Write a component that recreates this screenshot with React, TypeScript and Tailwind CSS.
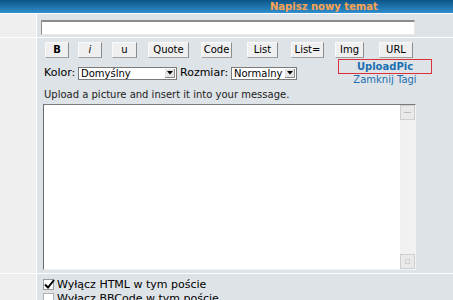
import React from "react";

const font = { fontFamily: '"DejaVu Sans", Verdana, sans-serif' };

function Btn({ label, w, ml, cls = "" }: { label: string; w: number; ml: number; cls?: string }) {
  return (
    <div
      className={`h-[16px] flex items-center justify-center text-[10px] leading-none text-black bg-[#efefef] border border-t-[#fafafa] border-l-[#fafafa] border-r-[#8c8c8c] border-b-[#a0a0a0] ${cls}`}
      style={{ width: w, marginLeft: ml }}
    >
      {label}
    </div>
  );
}

function Select({ label, w }: { label: string; w: number }) {
  return (
    <div
      className="h-[13px] bg-white border border-[#7a7a7a] flex items-center text-[10px] leading-none text-black pl-[2px] relative"
      style={{ width: w }}
    >
      <span>{label}</span>
      <div className="absolute right-[1px] top-[1px] w-[10px] h-[9px] bg-[#e4e4e4] border-r border-b border-[#8a8a8a] flex items-center justify-center">
        <svg width="6" height="4" viewBox="0 0 6 4">
          <polygon points="0,0 6,0 3,3.5" fill="#000" />
        </svg>
      </div>
    </div>
  );
}

export default function App() {
  return (
    <div className="w-[453px] h-[300px] overflow-hidden bg-white" style={font}>
      {/* header */}
      <div className="h-[13px] bg-gradient-to-b from-[#0b5588] to-[#2f8fcc] text-[#ffa34f] font-bold text-[10px] leading-[13px] pl-[270px]">
        Napisz nowy temat
      </div>
      {/* row 1: subject */}
      <div className="flex mt-px h-[23px]">
        <div className="w-[36px] bg-[#efefef]" />
        <div className="flex-1 ml-px bg-[#dee3e7] pt-[6px] pl-[4px]">
          <div className="w-[374px] h-[15px] bg-white border-t-2 border-l border-r border-b border-t-[#8c8c8c] border-l-[#8c8c8c] border-r-[#e8e8e8] border-b-[#e8e8e8]" />
        </div>
      </div>
      {/* row 2: message */}
      <div className="flex mt-px h-[235px]">
        <div className="w-[36px] bg-[#efefef]" />
        <div className="flex-1 ml-px bg-[#dee3e7] flex flex-col">
          <div className="flex mt-[4px]">
            <Btn label="B" w={24} ml={8} cls="font-bold" />
            <Btn label="i" w={24} ml={9} cls="italic" />
            <Btn label="u" w={25} ml={10} />
            <Btn label="Quote" w={41} ml={11} />
            <Btn label="Code" w={31} ml={12} />
            <Btn label="List" w={31} ml={15} />
            <Btn label="List=" w={33} ml={13} />
            <Btn label="Img" w={29} ml={11} />
            <Btn label="URL" w={34} ml={15} />
          </div>
          <div className="flex h-[26px] mt-px">
            <div className="w-[260px] flex items-center h-[26px] pl-[7px] pt-[3px] text-[11px] text-black">
              <span className="w-[34px] shrink-0">Kolor:</span>
              <Select label="Domyślny" w={99} />
              <span className="ml-[3px] w-[51px] shrink-0">Rozmiar:</span>
              <Select label="Normalny" w={66} />
            </div>
            <div className="ml-[41px] flex flex-col items-center">
              <div className="w-[94px] h-[15px] border border-[#d9303a] flex items-center justify-center text-[10px] font-bold text-[#1c6fb0] leading-none">
                UploadPic
              </div>
              <div className="text-[10px] text-[#1c6fb0] leading-[10px] mt-[1px]">Zamknij Tagi</div>
            </div>
          </div>
          <div className="text-[10px] text-[#222] pl-[7px] mt-[4px] leading-[12px]">
            Upload a picture and insert it into your message.
          </div>
          <div className="ml-[6px] mt-[3px] w-[373px] h-[166px] bg-white border-t border-l border-t-[#7a7a7a] border-l-[#6a6a6a] border-r border-b border-r-[#f2f2f2] border-b-[#f2f2f2] flex justify-end">
            <div className="w-[15px] h-full bg-[#f1f1f1] flex flex-col justify-between">
              <div className="w-[15px] h-[15px] bg-[#e9e9e9] border border-[#cfcfcf] flex items-center justify-center">
                <div className="w-[7px] h-px bg-[#bdbdbd]" />
              </div>
              <div className="w-[15px] h-[15px] bg-[#e9e9e9] border border-[#cfcfcf] flex items-center justify-center">
                <div className="w-[5px] h-[5px] border border-[#d0d0d0]" />
              </div>
            </div>
          </div>
        </div>
      </div>
      {/* row 3: options */}
      <div className="flex mt-px h-[40px]">
        <div className="w-[36px] bg-[#efefef]" />
        <div className="flex-1 ml-px bg-[#dee3e7] pl-[6px] pt-[4px] text-[11px] text-black leading-[13px]">
          <div className="flex items-center">
            <div className="w-[11px] h-[11px] bg-white border border-[#9a9a9a] relative">
              <svg className="absolute -left-[1px] -top-[2px]" width="13" height="13" viewBox="0 0 13 13">
                <path d="M2 6.5 L5 9.5 L11 2" stroke="#000" strokeWidth="2" fill="none" />
              </svg>
            </div>
            <span className="ml-[3px]">Wyłącz HTML w tym poście</span>
          </div>
          <div className="flex items-center mt-[1px]">
            <div className="w-[11px] h-[11px] bg-white border border-[#b0b0b0]" />
            <span className="ml-[3px]">Wyłącz BBCode w tym poście</span>
          </div>
        </div>
      </div>
    </div>
  );
}
